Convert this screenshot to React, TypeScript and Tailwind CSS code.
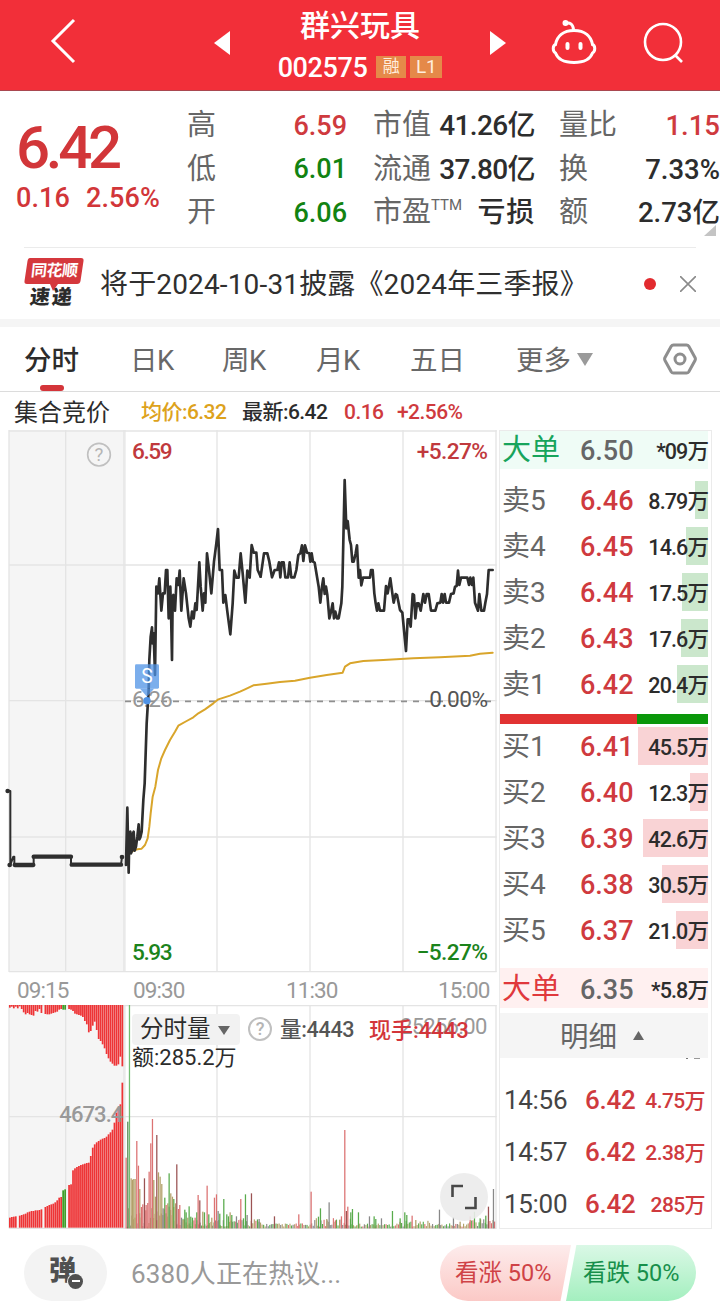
import { ReactNode } from 'react'
import clsx from 'clsx'

const stats = [
  { label: '高', value: '6.59', tone: 'text-[#cf3a3e]', cap: '市值', capValue: '41.26亿', right: '量比', rightValue: '1.15', rightTone: 'text-[#cf3a3e]' },
  { label: '低', value: '6.01', tone: 'text-[#128312]', cap: '流通', capValue: '37.80亿', right: '换', rightValue: '7.33%', rightTone: 'text-[#2d2d2d]' },
  { label: '开', value: '6.06', tone: 'text-[#128312]', cap: '市盈', sup: 'TTM', capValue: '亏损', right: '额', rightValue: '2.73亿', rightTone: 'text-[#2d2d2d]' },
]

const asks = [
  { label: '卖5', price: '6.46', volume: '8.79万', width: 13 },
  { label: '卖4', price: '6.45', volume: '14.6万', width: 22 },
  { label: '卖3', price: '6.44', volume: '17.5万', width: 26 },
  { label: '卖2', price: '6.43', volume: '17.6万', width: 27 },
  { label: '卖1', price: '6.42', volume: '20.4万', width: 31 },
]

const bids = [
  { label: '买1', price: '6.41', volume: '45.5万', width: 70 },
  { label: '买2', price: '6.40', volume: '12.3万', width: 18 },
  { label: '买3', price: '6.39', volume: '42.6万', width: 65 },
  { label: '买4', price: '6.38', volume: '30.5万', width: 46 },
  { label: '买5', price: '6.37', volume: '21.0万', width: 32 },
]

const trades = [
  { time: '14:56', price: '6.42', amount: '4.75万' },
  { time: '14:57', price: '6.42', amount: '2.38万' },
  { time: '15:00', price: '6.42', amount: '285万' },
]

// Both charts are drawn on a grid three times finer than the page
const priceMorning =
  '378,1305 382,1133 386,1328 388,1210 391,1205 393,1270 396,1262 399,1210 401,1205 404,1262 408,1250 412,1220 416,1183 418,1228 421,1222 425,1205 430,1110 434,1060 440,880 446,780 448,690 452,620 456,592 458,640 461,610 465,735 469,470 474,490 478,445 484,542 489,490 494,490 498,420 502,420 506,565 511,470 513,540 516,690 518,500 520,495 525,542 530,445 535,465 539,422 544,542 551,445 558,490 566,565 571,590 576,545 581,565 586,520 590,540 598,397 602,470 608,542 612,490 616,518 621,370 627,420 634,490 642,395 649,340 654,297 659,420 666,420 670,518 676,495 682,545 691,613 698,520 703,422 709,443 716,443 722,370 728,430 736,518 742,422 749,443 755,345 761,368 769,368 773,420 782,440'

const priceLater =
  '62,440 72,370 82,370 88,395 96,442 104,420 112,420 117,397 121,442 125,397 131,397 136,442 144,442 149,397 154,442 163,442 169,420 175,375 181,370 186,346 190,393 195,346 201,368 208,370 211,395 215,370 219,395 224,398 236,470 241,518 246,470 250,445 254,492 258,470 262,495 268,565 273,545 278,520 282,565 286,545 291,565 296,565 304,520 307,470 314,150 319,295 323,273 329,330 333,345 337,395 341,395 347,370 351,346 356,443 360,420 364,466 369,443 390,443 393,420 398,420 403,490 407,520 411,542 415,520 420,542 432,542 438,468 443,490 451,445 457,490 461,518 467,492 471,495 480,540 487,548 498,663 503,568 508,568 512,590 518,492 522,495 526,565 531,520 536,520 542,542 550,492 555,518 560,492 566,492 573,542 586,542 592,520 601,518 605,492 609,518 614,492 618,518 627,518 633,492 641,490 645,470 650,468 654,422 658,465 663,443 682,443 687,465 691,443 696,465 700,443 705,518 714,542 718,492 724,542 732,542 736,518 741,492 746,420 758,420'

const averageLine =
  '391,1268 400,1262 412,1258 425,1256 435,1245 443,1225 448,1190 452,1150 458,1100 466,1070 474,1020 484,985 495,960 510,930 525,905 535,887 560,873 580,862 595,850 615,838 640,820 655,808 690,797 720,785 735,778 760,766 800,761 840,756 885,752 930,743 980,735 1028,728 1035,710 1050,700 1090,693 1150,690 1240,685 1320,682 1410,677 1440,671 1478,668'

const auctionTop = [8, 5, 10, 5, 10, 4, 12, 22, 28, 24, 28, 30, 32, 18, 20, 12, 24, 0, 27, 28, 28, 26, 24, 22, 20, 14, 12, 14, 14, 0, 12, 14, 18, 26, 28, 30, 32, 36, 48, 58, 82, 78, 62, 50, 75, 102, 108, 118, 130, 147, 160, 170, 176, 182, 182, 178, 155, 184]
const auctionBottom = [30, 32, 33, 34, 0, 36, 38, 40, 42, 46, 48, 50, 50, 52, 52, 53, 55, 0, 62, 65, 68, 70, 72, 76, 82, 90, 92, 112, 115, 0, 128, 130, 172, 178, 182, 185, 188, 190, 192, 194, 195, 215, 240, 250, 256, 260, 264, 267, 269, 273, 280, 286, 294, 315, 345, 360, 370, 435]

const R = '#dc7272'
const G = '#59ab4c'
const O = '#b3a06a'
const D = '#9b5353'
const K = '#888888'

const spikes: [number, number, string][] = [
  [378, 212, R], [383, 320, '#52864e'], [388, 670, '#70bd70'], [393, 150, O], [397, 146, O], [401, 148, O], [405, 148, O], [410, 262, R], [415, 188, R], [419, 118, O], [424, 64, R], [428, 72, R], [433, 150, D], [438, 70, R], [443, 76, R], [447, 170, R], [452, 255, R], [457, 328, R], [461, 145, O], [466, 95, O], [470, 280, D], [475, 168, O], [480, 155, O], [485, 133, O], [489, 60, K], [494, 92, G], [498, 70, R], [503, 75, O], [507, 165, G], [512, 105, O], [517, 95, O], [521, 88, G], [526, 75, O], [530, 192, D], [535, 58, R], [539, 70, R], [544, 32, K], [549, 25, O], [554, 56, G], [558, 48, G], [563, 32, O], [567, 66, G], [572, 35, G], [577, 32, G], [585, 32, R], [590, 48, G], [594, 100, R], [599, 84, D], [608, 50, O], [613, 48, G], [621, 128, R], [626, 42, G], [635, 32, O], [643, 92, R], [649, 102, R], [654, 52, K], [659, 44, G], [671, 88, G], [680, 42, G], [685, 36, G], [690, 48, O], [695, 40, G], [709, 36, K], [722, 88, R], [730, 30, G], [736, 102, G], [741, 40, K], [754, 105, D], [777, 28, K], [823, 36, D], [896, 42, R], [933, 110, R], [955, 35, G], [961, 60, G], [980, 28, O], [987, 78, K], [1006, 24, R], [1024, 36, R], [1034, 295, R], [1039, 52, D], [1043, 65, R], [1052, 48, G], [1057, 58, G], [1075, 48, G], [1108, 36, K], [1122, 36, G], [1127, 28, G], [1144, 30, K], [1177, 52, G], [1200, 30, G], [1214, 48, G], [1220, 40, G], [1236, 38, R], [1247, 25, O], [1318, 56, K], [1360, 34, K], [1380, 20, O], [1410, 36, R], [1423, 50, G], [1440, 30, G], [1457, 38, G], [1465, 65, D], [1480, 118, K],
]

const noise = Array.from({ length: 238 }, (_, i) => {
  const x = 380 + i * 4.65
  const wave = Math.abs(Math.sin(i * 12.9898) * 43758.5453) % 1
  const busy = x < 520 ? 60 : x < 780 ? 24 : (x > 940 && x < 1060) || x > 1400 ? 26 : x > 1180 && x < 1290 ? 18 : 10
  return { x, h: 5 + wave * busy, color: [R, G, K, O][(i * 7 + Math.floor(wave * 10)) % 4] }
})

function Glyph({ d, className }: { d: string; className?: string }) {
  return (
    <svg viewBox="0 0 16 16" preserveAspectRatio="none" className={className}>
      <path d={d} fill="currentColor" />
    </svg>
  )
}

function HelpIcon({ className }: { className?: string }) {
  return (
    <span className={clsx('flex h-6 w-6 items-center justify-center rounded-full border-2 border-[#c0c0c0] text-[18px] leading-none text-[#b5b5b5]', className)}>
      ?
    </span>
  )
}

function Header() {
  return (
    <header className="flex h-[91px] items-center border-b border-[#a94750] bg-[#f22f39] text-white">
      <svg viewBox="0 0 26 46" className="ml-[50px] h-[46px] w-[26px] -translate-y-[4px]" fill="none" stroke="currentColor" strokeWidth="3">
        <path d="M24 2 3 23l21 21" />
      </svg>
      <Glyph d="M16 0v16L0 8z" className="ml-[138px] h-6 w-4 -translate-y-[2px]" />
      <div className="flex w-[260px] flex-col items-center">
        <div className="h-[44px] text-[30px] leading-[50px] font-medium">群兴玩具</div>
        <div className="flex h-[44px] items-center">
          <span className="pt-[2px] text-[27px] font-medium tracking-[-0.4px]">002575</span>
          <span className="ml-[9px] flex h-[22px] w-[30px] items-center justify-center bg-[#e58949] text-[17px] text-[#ffeedd]">融</span>
          <span className="ml-1 flex h-[22px] w-8 items-center justify-center bg-[#e58949] text-[19px] text-[#ffeedd]">L1</span>
        </div>
      </div>
      <Glyph d="M0 0v16l16-8z" className="h-6 w-4 -translate-y-[2px]" />
      <svg viewBox="0 0 48 46" className="ml-[44px] h-[46px] w-12 -translate-y-[3px]" fill="none" stroke="currentColor" strokeWidth="3">
        <path d="M15 4.500c5-1.500 8 .5 8.500 6" strokeLinecap="round" />
        <circle cx="15.500" cy="4" r="1.500" fill="currentColor" />
        <path d="M24 11.500c11 0 17 6 18.500 14 3 1 3 7 0 8.500C40 40.500 35 43.500 24 43.500S8 40.500 5.500 34c-3-1.500-3-7.500 0-8.500C7 17.500 13 11.500 24 11.500Z" />
        <path d="M17.500 25v4M30.500 25v4" strokeWidth="4" strokeLinecap="round" />
      </svg>
      <svg viewBox="0 0 44 44" className="ml-[44px] h-[44px] w-[44px] -translate-y-[2px]" fill="none" stroke="currentColor" strokeWidth="2.600">
        <circle cx="21" cy="21" r="18" />
        <path d="m33 34 7 7" />
      </svg>
    </header>
  )
}

function Summary() {
  return (
    <section className="relative flex h-[156px] pt-[13px]">
      <div className="w-[187px] pl-4 text-[#d23639]">
        <div className="pt-[15px] text-[60px] leading-[58px] font-medium tracking-[-4.300px]">6.42</div>
        <div className="flex gap-[16px] text-[27px] leading-[42px] font-medium tracking-[0.1px]">
          <span>0.16</span>
          <span>2.56%</span>
        </div>
      </div>
      <div className="flex-1">
        {stats.map((row) => (
          <div key={row.label} className="flex h-[43.5px] items-center text-[29px] whitespace-nowrap text-[#666]">
            <span className="w-[80px]">{row.label}</span>
            <span className={clsx('w-[80px] text-right text-[27px] font-medium', row.tone)}>{row.value}</span>
            <span className="ml-[26px]">{row.cap}</span>
            {row.sup && <sup className="text-[15px]">{row.sup}</sup>}
            <span className="w-0 flex-1 text-right">
              <span
                className={clsx(
                  'float-right text-[28px] leading-[43px] font-medium text-[#2d2d2d]',
                  row.sup ? 'tracking-[0.8px]' : 'tracking-[-0.6px]',
                )}
              >
                {row.capValue}
              </span>
            </span>
            <span className="ml-[24px] w-[60px]">{row.right}</span>
            <span className={clsx('w-[101px] text-right text-[27.5px] font-medium', row.rightTone)}>{row.rightValue}</span>
          </div>
        ))}
      </div>
      <Glyph d="M16 0v16H0z" className="absolute right-[4px] bottom-[11px] h-[11px] w-[12px] text-[#c4c4c4]" />
    </section>
  )
}

function NewsBar() {
  return (
    <section className="border-b-[8px] border-[#f5f5f5]">
      <div className="mx-6 flex h-[72px] items-center border-t border-[#ebebeb]">
        <div className="relative flex w-[60px] flex-col items-center pt-[2px]">
          <svg viewBox="0 0 60 34" className="absolute top-0 left-0 h-[34px] w-[60px] text-[#d5383d]">
            <path d="M6 0h51q3 0 2.500 3l-3 20q-.5 3-3.500 3H34l-5 7-3-7H3q-3 0-2.500-3l3-20Q4 0 6 0Z" fill="currentColor" />
          </svg>
          <span className="relative -skew-x-6 text-[16px] leading-[22px] font-bold tracking-[-0.5px] text-white">同花顺</span>
          <span className="relative mt-[4px] -ml-1 -skew-x-6 text-[20px] leading-[23px] font-black tracking-[2px] text-[#2b2b2b]">速递</span>
        </div>
        <span className="ml-4 pt-[2px] text-[28px] tracking-[0.150px] whitespace-nowrap text-[#2f2f2f]">将于2024-10-31披露《2024年三季报》</span>
        <span className="ml-auto h-3 w-3 rounded-full bg-[#e22b2f]" />
        <svg viewBox="0 0 16 16" className="ml-6 h-4 w-4 text-[#8a8a8a]" stroke="currentColor" strokeWidth="1.600">
          <path d="m0 0 16 16M16 0 0 16" />
        </svg>
      </div>
    </section>
  )
}

function Tabs() {
  return (
    <nav className="flex h-[65px] items-center border-b border-[#dcdcdc] pl-6 text-[27.5px] whitespace-nowrap text-[#686868]">
      <span className="relative flex h-full w-[106px] items-center pt-[3px] font-medium text-[#2c2c2c]">
        分时
        <i className="absolute bottom-0 left-4 h-[6px] w-6 rounded-full bg-[#d4353a]" />
      </span>
      <span className="w-[92px] pt-[3px] tracking-[-0.6px]">日K</span>
      <span className="w-[94px] pt-[3px] tracking-[-0.4px]">周K</span>
      <span className="w-[94px] pt-[3px] tracking-[-0.4px]">月K</span>
      <span className="w-[106px] pt-[3px]">五日</span>
      <span className="pt-[3px]">更多</span>
      <Glyph d="M0 0h16L8 16z" className="ml-[6px] h-[13px] w-4 text-[#9a9a9a]" />
      <svg viewBox="0 0 34 34" className="mr-[23px] ml-auto h-[34px] w-[34px] text-[#8e8e8e]" fill="none" stroke="currentColor" strokeWidth="3">
        <path d="M10.500 3h13q1.500 0 2.300 1.300L32 15.500q.8 1.500 0 3L25.800 29.700Q25 31 23.500 31h-13q-1.500 0-2.300-1.300L2 18.500q-.8-1.500 0-3L8.200 4.300Q9 3 10.500 3Z" />
        <circle cx="17" cy="17" r="5" />
      </svg>
    </nav>
  )
}

function Quote() {
  return (
    <div className="flex h-[38px] items-center pt-[4px] pl-[14px] text-[21px] font-medium tracking-[-0.550px] whitespace-nowrap text-[#2c2c2c]">
      <span className="w-[127px] text-[24px] font-normal tracking-normal">集合竞价</span>
      <span className="w-[101px] text-[#dda21c]">均价:6.32</span>
      <span className="w-[102px]">最新:6.42</span>
      <span className="w-[53px] text-[#cf3a3e]">0.16</span>
      <span className="text-[#cf3a3e]">+2.56%</span>
    </div>
  )
}

function Grid({ height, rows }: { height: number; rows: number[] }) {
  return (
    <g stroke="#e4e4e4" strokeWidth="4">
      <rect x="27" y="0" width="347" height={height} fill="#f5f5f5" stroke="none" />
      {[27, 197, 651, 930, 1209, 1488].map((x) => (
        <path key={x} d={`M${x} 0V${height}`} />
      ))}
      <path d={`M373 0V${height}`} stroke="#e9e9e9" strokeWidth="8" />
      {rows.map((y) => (
        <path key={y} d={`M27 ${y}H1490`} />
      ))}
    </g>
  )
}

function PriceChart() {
  return (
    <svg viewBox="0 0 1491 1629" className="block h-[543px] w-[497px]">
      <Grid height={1626} rows={[3, 405, 812, 1221, 1625]} />
      <path d="M375 814H1489" stroke="#8f8f8f" strokeWidth="5" strokeDasharray="18 18" />
      <g fontSize="68" fontWeight="500">
        <text x="396" y="86" fill="#c0393d" textLength="122">6.59</text>
        <text x="396" y="1591" fill="#1b831b" textLength="122">5.93</text>
        <text x="396" y="832" fill="#969696" fontWeight="400" textLength="122">6.26</text>
        <text x="1250" y="86" fill="#c0393d" textLength="214">+5.27%</text>
        <text x="1288" y="832" fill="#555" fontWeight="400" textLength="176">0.00%</text>
        <text x="1250" y="1591" fill="#1b831b" textLength="214">−5.27%</text>
      </g>
      <g fill="none" strokeLinejoin="round" strokeLinecap="round">
        <polyline points={averageLine} stroke="#d9a52b" strokeWidth="6" />
        <g stroke="#2e2e2e" strokeWidth="8">
          <polyline points={priceMorning} />
          <polyline points={priceLater} transform="translate(720 0)" />
          <path d="M23 1083h8v222l9-25h3v25h58v-25h112v24h150l3-23" strokeWidth="6" />
          <path d="M44 1305h56M101 1280h112M215 1304h148" strokeWidth="13" />
        </g>
      </g>
      <g fill="#2e2e2e">
        <circle cx="23" cy="1083" r="7" />
        <circle cx="29" cy="1305" r="7" />
        <circle cx="366" cy="1281" r="7" />
      </g>
      <rect x="405" y="703" width="72" height="73" rx="4" fill="#4f93e6" fillOpacity="0.75" />
      <path d="M420 776h42l-21 24z" fill="#4f93e6" fillOpacity="0.75" />
      <circle cx="441" cy="812" r="11" fill="#4f93e6" />
      <text x="441" y="760" fontSize="58" fill="#fff" textAnchor="middle">S</text>
      <circle cx="297" cy="74" r="34" fill="none" stroke="#c0c0c0" strokeWidth="5" />
      <text x="297" y="94" fontSize="56" fill="#b5b5b5" textAnchor="middle">?</text>
    </svg>
  )
}

function VolumeChart() {
  return (
    <div className="relative">
      <svg viewBox="0 0 1491 672" className="block h-[224px] w-[497px]">
        <Grid height={670} rows={[2, 335, 670]} />
        {auctionBottom.map((h, i) => (
          <g key={i} fill={i > 26 && i < 29 ? '#3d9f28' : '#ee3436'}>
            <rect x={27 + i * 5.92} y={0} width="5.200" height={auctionTop[i]} />
            <rect x={27 + i * 5.92} y={668 - h} width="5.200" height={h} />
          </g>
        ))}
        {noise.map((bar, i) => (
          <rect key={i} x={bar.x} y={670 - bar.h} width="3.400" height={bar.h} fill={bar.color} />
        ))}
        {spikes.map(([x, h, color], i) => (
          <rect key={i} x={x - 1.5} y={670 - h} width="3.800" height={h} fill={color} />
        ))}
        <text x="178" y="350" fontSize="66" fill="#999" fontWeight="500" textLength="192">4673.4</text>
        <text x="1200" y="87" fontSize="66" fill="#999" textLength="262">25256.00</text>
      </svg>
      <div className="absolute top-2 left-[132px] flex h-[32px] items-center text-[21.5px] font-medium tracking-[-0.3px] whitespace-nowrap">
        <span className="flex h-[31px] w-[108px] items-center rounded bg-[#f2f2f2] pt-[2px] pl-2 text-[23.5px] font-normal tracking-normal text-[#2c2c2c]">
          分时量
          <Glyph d="M0 0h16L8 16z" className="ml-[7px] h-[9px] w-3 text-[#666]" />
        </span>
        <HelpIcon className="ml-2" />
        <span className="ml-2 w-[89px] pt-[2px] text-[#555]">量:4443</span>
        <span className="pt-[2px] text-[22px] tracking-[0px] text-[#d3353a]">现手:4443</span>
      </div>
      <div className="absolute top-[39px] left-[132px] text-[22px] leading-7 text-[#2c2c2c]">额:285.2万</div>
      <div className="absolute top-[168px] left-[440px] flex h-12 w-12 items-center justify-center rounded-full bg-[#ebebeb]/90">
        <svg viewBox="0 0 26 26" className="h-[26px] w-[26px] text-[#484848]" fill="none" stroke="currentColor" strokeWidth="2.600">
          <path d="M1.500 13V2H12M24.500 13v11H14" />
        </svg>
      </div>
    </div>
  )
}

function BookRow({ label, price, volume, children, tone = 'text-[#666]', priceTone = 'text-[#cf3a3e]' }: {
  label: string
  price: string
  volume: string
  children?: ReactNode
  tone?: string
  priceTone?: string
}) {
  return (
    <div className="relative flex h-[38px] items-center text-[28px] whitespace-nowrap">
      {children}
      <span className={clsx('relative w-[80px] pt-[2px] pl-[2px]', tone)}>{label}</span>
      <span className={clsx('relative pt-[2px] text-[27px] font-medium', priceTone)}>{price}</span>
      <span className="relative ml-auto pt-[5px] text-[21.5px] font-medium tracking-[-0.9px] text-[#2c2c2c]">{volume}</span>
    </div>
  )
}

function OrderBook() {
  return (
    <aside className="ml-[2px] h-[799px] w-[213px] border border-[#ebebeb] pr-[3px]">
      <div className="h-[38px] bg-[#effcf6]">
        <BookRow label="大单" price="6.50" volume="*09万" tone="text-[#17a45c] text-[29px]" priceTone="text-[#666]" />
      </div>
      <div className="mt-3 flex flex-col gap-2">
        {asks.map((row) => (
          <BookRow key={row.label} label={row.label} price={row.price} volume={row.volume}>
            <i className="absolute top-0 right-0 h-full bg-[#cbe7cc]" style={{ width: row.width }} />
          </BookRow>
        ))}
      </div>
      <div className="mt-[11px] flex h-[10px]">
        <i className="w-[137px] bg-[#e13232]" />
        <i className="flex-1 bg-[#0a970a]" />
      </div>
      <div className="mt-[3px] flex flex-col gap-2">
        {bids.map((row) => (
          <BookRow key={row.label} label={row.label} price={row.price} volume={row.volume}>
            <i className="absolute top-0 right-0 h-full bg-[#f9d3d5]" style={{ width: row.width }} />
          </BookRow>
        ))}
      </div>
      <div className="mt-[19px] h-10 bg-[#fff0f0] pt-[2px]">
        <BookRow label="大单" price="6.35" volume="*5.8万" tone="text-[#e0383c] text-[29px]" priceTone="text-[#666]" />
      </div>
      <div className="mt-[5px] flex h-[45px] items-center bg-[#f5f5f5] pl-[60px] text-[28.5px] text-[#666]">
        <span className="pt-[5px]">明细</span>
        <Glyph d="M8 0l8 16H0z" className="ml-4 h-[9px] w-[11px] text-[#666]" />
      </div>
      {/* Bottom edge of the row scrolled under the bar */}
      <div className="flex h-[2px] justify-end gap-[6px] pr-2">
        <i className="h-px w-[2px] bg-[#777]" />
        <i className="h-px w-[6px] bg-[#999]" />
      </div>
      <div className="pt-[14px]">
        {trades.map((row) => (
          <div key={row.time} className="flex h-[52px] items-center pr-[3px] pl-1 text-[26px] text-[#444]">
            <span className="w-[81px] tracking-[-0.3px]">{row.time}</span>
            <span className="font-medium tracking-[-0.3px] text-[#cf3a3e]">{row.price}</span>
            <span className="ml-auto pt-1 text-[21px] font-medium tracking-[-0.6px] text-[#cf3a3e]">{row.amount}</span>
          </div>
        ))}
      </div>
    </aside>
  )
}

function Footer() {
  return (
    <footer className="flex h-[78px] items-start px-6 pt-4">
      <div className="flex h-14 w-[83px] items-center justify-center rounded-full bg-[#f3f3f3]">
        <span className="relative mr-[6px] pb-1 text-[27px] leading-none font-black text-[#505050]">
          弹
          <i className="absolute -right-[7px] bottom-0 flex h-[15px] w-[15px] items-center justify-center rounded-full bg-[#505050] ring-1 ring-[#f3f3f3]">
            <i className="h-[2px] w-2 bg-white" />
          </i>
        </span>
      </div>
      <span className="ml-6 text-[26px] leading-[59px] tracking-[0.1px] text-[#999]">6380人正在热议...</span>
      <div className="ml-auto flex text-[23.5px] leading-[57px]">
        <span className="h-14 w-[131px] rounded-l-full bg-linear-to-b from-[#fdecec] to-[#fbc9c6] pl-[15px] text-[#cf4246] [clip-path:polygon(0_0,100%_0,92%_100%,0_100%)]">看涨 50%</span>
        <span className="-ml-[5px] h-14 w-[130px] rounded-r-full bg-linear-to-b from-[#daf8e6] to-[#a3efbf] pl-[17px] text-[#178f4b] [clip-path:polygon(8%_0,100%_0,100%_100%,0_100%)]">看跌 50%</span>
      </div>
    </footer>
  )
}

export default function App() {
  return (
    <div className="h-[1307px] w-[720px] overflow-hidden bg-white font-['Roboto','Noto_Sans_CJK_SC',sans-serif]">
      <Header />
      <Summary />
      <NewsBar />
      <Tabs />
      <Quote />
      <main className="flex h-[799px]">
        <div className="w-[497px]">
          <PriceChart />
          <div className="flex h-[32px] items-center pt-1 text-[22.5px] tracking-[-0.9px] text-[#999]">
            <span className="ml-[17px] w-[116px]">09:15</span>
            <span className="w-[153px]">09:30</span>
            <span className="w-[152px]">11:30</span>
            <span>15:00</span>
          </div>
          <VolumeChart />
        </div>
        <OrderBook />
      </main>
      <Footer />
    </div>
  )
}
